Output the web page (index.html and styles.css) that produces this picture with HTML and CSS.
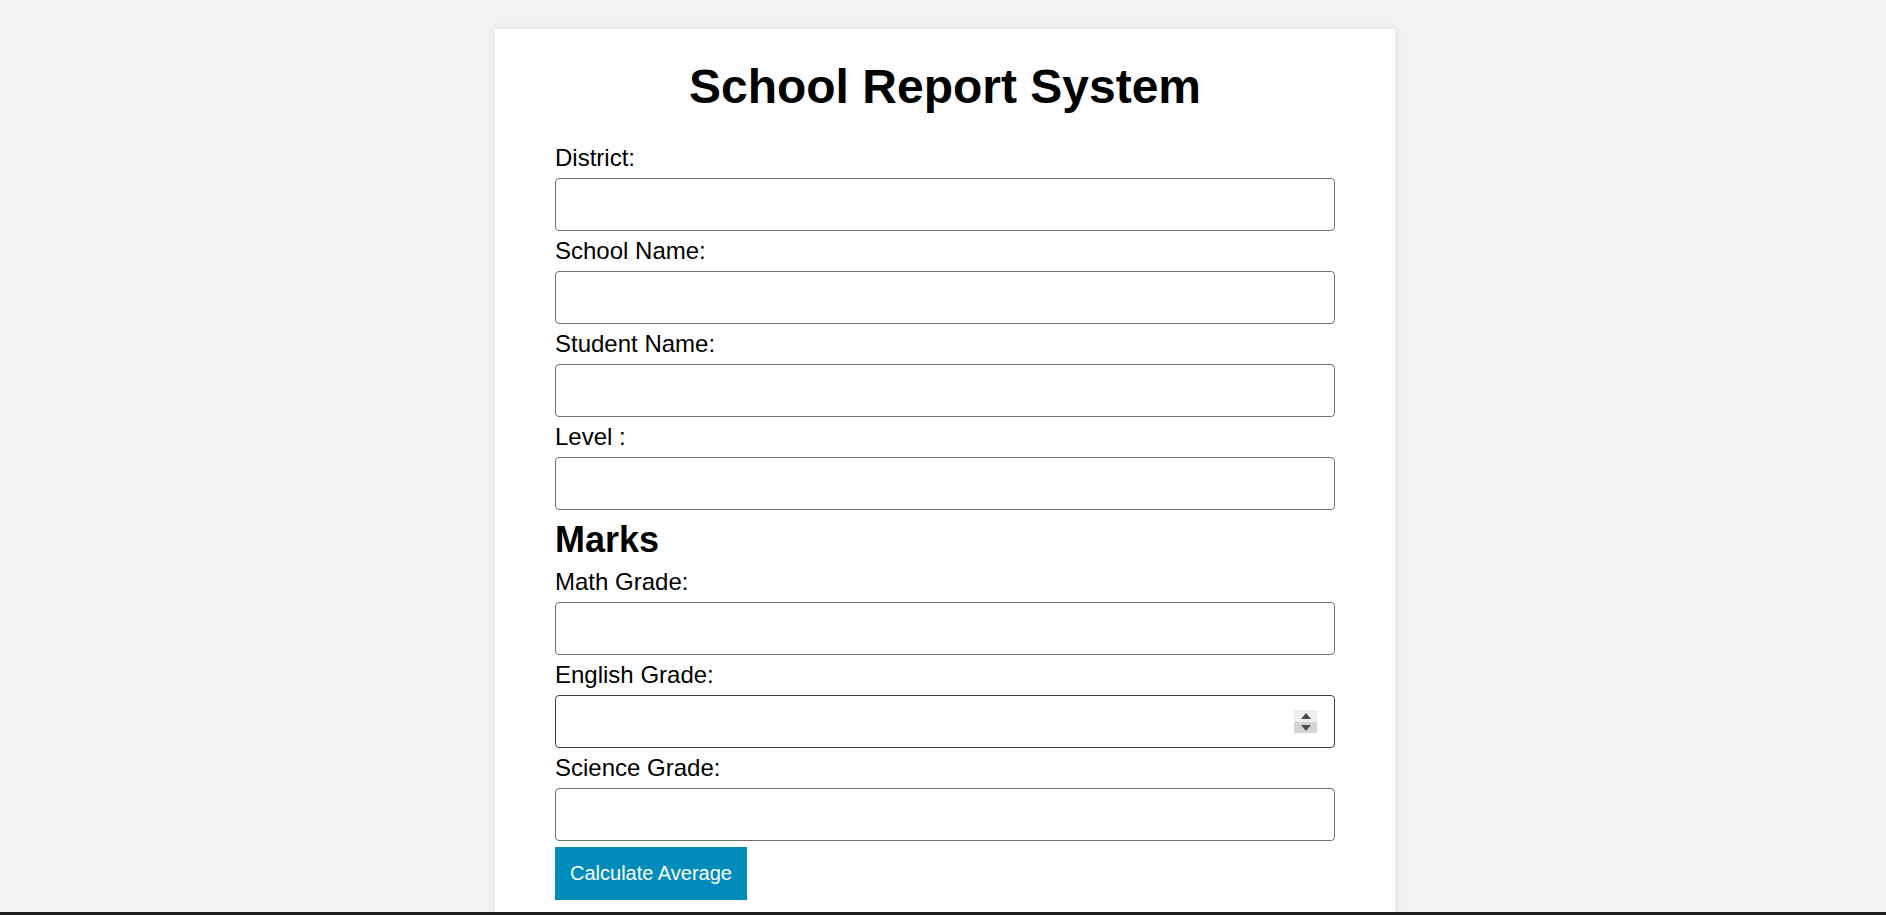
FILE: index.html
```html
<!DOCTYPE html>
<html lang="en">
<head>
<meta charset="utf-8">
<title>School Report System</title>
<link rel="stylesheet" href="styles.css">
</head>
<body>
<main class="card">
  <h1 class="title">School Report System</h1>
  <form class="form">
    <label class="label" for="district">District:</label>
    <input class="field" id="district" type="text">
    <label class="label" for="school">School Name:</label>
    <input class="field" id="school" type="text">
    <label class="label" for="student">Student Name:</label>
    <input class="field" id="student" type="text">
    <label class="label" for="level">Level :</label>
    <input class="field" id="level" type="text">
    <h2 class="section">Marks</h2>
    <label class="label" for="math">Math Grade:</label>
    <input class="field" id="math" type="text">
    <label class="label" for="english">English Grade:</label>
    <div class="field-wrap">
      <input class="field field-hover" id="english" type="text">
      <span class="spinner" aria-hidden="true">
        <span class="spin-up"><svg width="12" height="8" viewBox="0 0 12 8"><path d="M6 1 L11 7 L1 7 Z" fill="#4d4d4d"/></svg></span>
        <span class="spin-down"><svg width="12" height="8" viewBox="0 0 12 8"><path d="M1 1 L11 1 L6 7 Z" fill="#4d4d4d"/></svg></span>
      </span>
    </div>
    <label class="label" for="science">Science Grade:</label>
    <input class="field" id="science" type="text">
    <button class="btn" type="button">Calculate Average</button>
  </form>
</main>
<div class="bottom-edge"></div>
</body>
</html>
```
FILE: styles.css
```css
html, body {
  margin: 0;
  padding: 0;
}
body {
  background: #f2f2f2;
  font-family: "Liberation Sans", Arial, sans-serif;
  color: #000;
}
.card {
  width: 900px;
  box-sizing: border-box;
  margin: 29px 0 0 calc(50% - 448px);
  padding: 30px 60px 60px;
  background: #fff;
  box-shadow: 0 0 10px rgba(0, 0, 0, 0.08);
  min-height: 1000px;
}
.title {
  margin: 0 0 30px;
  font-size: 48px;
  font-weight: bold;
  text-align: center;
  line-height: 55px;
}
.form {
  display: flex;
  flex-direction: column;
  align-items: flex-start;
}
.label {
  display: block;
  font-size: 24px;
  line-height: 28px;
  margin: 0 0 6px;
}
.field {
  display: block;
  width: 780px;
  height: 53px;
  box-sizing: border-box;
  margin: 0 0 6px;
  border: 1.5px solid #707070;
  border-radius: 4px;
  background: #fff;
  font-size: 20px;
  padding: 0 12px;
  font-family: inherit;
}
.field-wrap {
  position: relative;
  width: 780px;
}
.field-hover {
  border-color: #3f3f3f;
}
.spinner {
  position: absolute;
  top: 15px;
  right: 18px;
  width: 23px;
  height: 23px;
  display: flex;
  flex-direction: column;
}
.spin-up, .spin-down {
  flex: 1;
  display: flex;
  align-items: center;
  justify-content: center;
}
.spin-up {
  background: #efefef;
}
.spin-down {
  background: #d4d4d4;
}
.section {
  margin: 3px 0 8px;
  font-size: 36px;
  font-weight: bold;
  line-height: 41.4px;
}
.btn {
  height: 53px;
  padding: 0 15px;
  border: none;
  border-radius: 0;
  background: #008cba;
  color: #fff;
  font-family: "Liberation Sans", Arial, sans-serif;
  font-size: 20px;
  cursor: pointer;
}
.bottom-edge {
  position: fixed;
  left: 0;
  right: 0;
  bottom: 0;
  height: 3px;
  background: #1e1e1e;
}
```
